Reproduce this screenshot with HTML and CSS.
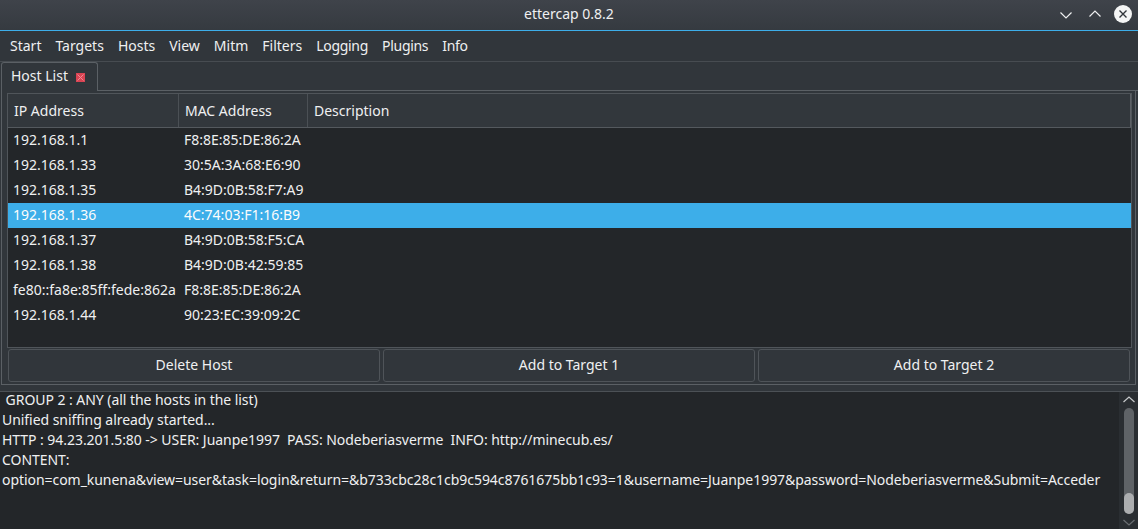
FILE: index.html
```html
<!DOCTYPE html>
<html>
<head>
<meta charset="utf-8">
<title>ettercap 0.8.2</title>
<link rel="stylesheet" href="styles.css">
</head>
<body>
<div class="window">
  <header class="titlebar">
    <div class="tb-side"></div>
    <div class="title">ettercap 0.8.2</div>
    <div class="tb-side controls">
      <svg class="chev-down" width="12" height="7" viewBox="0 0 12 7"><path d="M0.5 0.5 L6 6 L11.5 0.5" fill="none" stroke="#eff0f1" stroke-width="1.2"/></svg>
      <svg class="chev-up" width="12" height="7" viewBox="0 0 12 7"><path d="M0.5 6.5 L6 1 L11.5 6.5" fill="none" stroke="#eff0f1" stroke-width="1.2"/></svg>
      <svg class="close" width="18" height="18" viewBox="0 0 18 18"><circle cx="9" cy="9" r="9" fill="#f4f5f5"/><path d="M5.5 5.5 L12.5 12.5 M12.5 5.5 L5.5 12.5" stroke="#31363b" stroke-width="1.4"/></svg>
    </div>
  </header>
  <nav class="menubar">
    <span class="menu-item">Start</span>
    <span class="menu-item">Targets</span>
    <span class="menu-item">Hosts</span>
    <span class="menu-item">View</span>
    <span class="menu-item">Mitm</span>
    <span class="menu-item">Filters</span>
    <span class="menu-item">Logging</span>
    <span class="menu-item">Plugins</span>
    <span class="menu-item">Info</span>
  </nav>
  <div class="tabbar">
    <div class="tab">
      <span class="tab-label">Host List</span>
      <svg class="tab-close" width="9" height="9" viewBox="0 0 9 9"><rect x="0" y="0" width="9" height="9" fill="#da4453"/><path d="M1.5 1.5 L7.5 7.5 M7.5 1.5 L1.5 7.5" stroke="#f08a94" stroke-width="1"/></svg>
    </div>
    <div class="tab-rest"></div>
  </div>
  <section class="panel">
    <div class="table">
      <div class="thead">
        <div class="th c-ip">IP Address</div>
        <div class="th c-mac">MAC Address</div>
        <div class="th c-desc">Description</div>
      </div>
      <div class="tbody">
        <div class="tr"><div class="td c-ip">192.168.1.1</div><div class="td c-mac">F8:8E:85:DE:86:2A</div><div class="td c-desc"></div></div>
        <div class="tr"><div class="td c-ip">192.168.1.33</div><div class="td c-mac">30:5A:3A:68:E6:90</div><div class="td c-desc"></div></div>
        <div class="tr"><div class="td c-ip">192.168.1.35</div><div class="td c-mac">B4:9D:0B:58:F7:A9</div><div class="td c-desc"></div></div>
        <div class="tr selected"><div class="td c-ip">192.168.1.36</div><div class="td c-mac">4C:74:03:F1:16:B9</div><div class="td c-desc"></div></div>
        <div class="tr"><div class="td c-ip">192.168.1.37</div><div class="td c-mac">B4:9D:0B:58:F5:CA</div><div class="td c-desc"></div></div>
        <div class="tr"><div class="td c-ip">192.168.1.38</div><div class="td c-mac">B4:9D:0B:42:59:85</div><div class="td c-desc"></div></div>
        <div class="tr"><div class="td c-ip">fe80::fa8e:85ff:fede:862a</div><div class="td c-mac">F8:8E:85:DE:86:2A</div><div class="td c-desc"></div></div>
        <div class="tr"><div class="td c-ip">192.168.1.44</div><div class="td c-mac">90:23:EC:39:09:2C</div><div class="td c-desc"></div></div>
      </div>
    </div>
    <div class="buttons">
      <button class="btn">Delete Host</button>
      <button class="btn">Add to Target 1</button>
      <button class="btn">Add to Target 2</button>
    </div>
  </section>
  <section class="log">
    <div class="log-text"><div class="log-line"> GROUP 2 : ANY (all the hosts in the list)</div><div class="log-line">Unified sniffing already started...</div><div class="log-line">HTTP : 94.23.201.5:80 -&gt; USER: Juanpe1997  PASS: Nodeberiasverme  INFO: http://minecub.es/</div><div class="log-line">CONTENT: </div><div class="log-line">option=com_kunena&amp;view=user&amp;task=login&amp;return=&amp;b733cbc28c1cb9c594c8761675bb1c93=1&amp;username=Juanpe1997&amp;password=Nodeberiasverme&amp;Submit=Acceder</div></div>
    <div class="scrollbar">
      <svg class="sb-arrow" width="12" height="7" viewBox="0 0 12 7"><path d="M0.5 6 L6 1 L11.5 6" fill="none" stroke="#c8cacc" stroke-width="1.2"/></svg>
      <div class="sb-track"><div class="sb-handle"></div></div>
      <svg class="sb-arrow" width="12" height="7" viewBox="0 0 12 7"><path d="M0.5 1 L6 6 L11.5 1" fill="none" stroke="#6a6e72" stroke-width="1.2"/></svg>
    </div>
  </section>
</div>
</body>
</html>
```

FILE: styles.css
```css
* { box-sizing: border-box; }
html, body {
  margin: 0;
  padding: 0;
  background: #31363b;
}
body {
  font-family: "Noto Sans", "DejaVu Sans", sans-serif;
  font-size: 14px;
  color: #eff0f1;
  width: 1138px;
  height: 529px;
  overflow: hidden;
}
.window {
  display: flex;
  flex-direction: column;
  height: 529px;
}

/* title bar */
.titlebar {
  height: 31px;
  flex: none;
  display: grid;
  grid-template-columns: 1fr auto 1fr;
  align-items: start;
  background: linear-gradient(#3f434a, #353a40);
  border-bottom: 1px solid #3daee9;
}
.title {
  color: #eff0f1;
  line-height: 28px;
}
.controls {
  display: flex;
  justify-content: flex-end;
  align-items: flex-start;
  padding-right: 6px;
  padding-top: 5px;
}
.chev-down { margin-top: 7px; }
.chev-up { margin-left: 17px; margin-top: 5px; }
.close { margin-left: 13px; }

/* menu */
.menubar {
  height: 30px;
  flex: none;
  display: flex;
  align-items: center;
  padding-left: 3px;
  background: #31363b;
}
.menu-item {
  padding: 0 7px;
  line-height: 30px;
}
.menu-item:nth-child(n+7) { letter-spacing: -0.3px; }

/* tabs */
.tabbar {
  height: 30px;
  flex: none;
  display: flex;
  border-top: 1px solid #474c51;
}
.tab {
  margin-left: 1px;
  width: 97px;
  height: 29px;
  display: flex;
  align-items: flex-start;
  padding-left: 9px;
  padding-top: 3px;
  border: 1px solid #5b6065;
  border-bottom: none;
  border-radius: 3px 3px 0 0;
  background: #31363b;
}
.tab-label { line-height: 20px; }
.tab-close { margin-left: 8px; margin-top: 7px; }
.tab-rest {
  flex: 1;
  border-bottom: 1px solid #5b6065;
}

/* panel */
.panel {
  flex: none;
  margin-left: 1px;
  width: 1135px;
  border: 1px solid #5b6065;
  border-top: none;
  padding: 2px 3px 2px 5px;
}
.table {
  border: 1px solid #50555a;
  display: flex;
  flex-direction: column;
}
.thead {
  display: flex;
  height: 34px;
  background: #32373c;
  border-bottom: 1px solid #54595e;
}
.th {
  line-height: 33px;
  padding-left: 6px;
  border-right: 1px solid #4b5055;
  color: #eff0f1;
}
.c-ip { width: 171px; flex: none; }
.c-mac { width: 129px; flex: none; }
.c-desc { flex: 1; }
.th.c-desc { border-right: 1px solid #5d6166; }
.tbody {
  height: 219px;
  background: #232629;
}
.tr {
  display: flex;
  height: 25px;
  line-height: 23px;
}
.td { padding-left: 5px; white-space: nowrap; }
.tr.selected { background: #3daee9; color: #fcfcfc; }

.buttons {
  display: grid;
  grid-template-columns: 1fr 1fr 1fr;
  gap: 3px;
  margin: 1px 2px 0 1px;
}
.btn {
  height: 33px;
  font-family: inherit;
  font-size: 14px;
  color: #eff0f1;
  background: #31363b;
  border: 1px solid #4f5459;
  border-radius: 3px;
  padding: 0 0 3px;
}

/* log */
.log {
  flex: 1;
  margin-top: 6px;
  display: flex;
  background: #232629;
  border-top: 1px solid #4c5156;
  min-height: 0;
}
.log-text {
  flex: 1;
  padding-left: 2px;
  margin-top: -2px;
  letter-spacing: -0.05px;
}
.log-line {
  white-space: pre;
  line-height: 20px;
}
.scrollbar {
  width: 19px;
  flex: none;
  background: #2a2e32;
  display: flex;
  flex-direction: column;
  align-items: center;
  padding: 4px 0 3px 1px;
}
.sb-arrow { flex: none; }
.sb-track {
  width: 10px;
  flex: 1;
  margin: 5px 0 5px;
  background: #5f6367;
  border-radius: 5px;
  display: flex;
  flex-direction: column;
  justify-content: flex-end;
}
.sb-handle {
  height: 21px;
  background: #acaeb0;
  border-radius: 5px;
}
```
